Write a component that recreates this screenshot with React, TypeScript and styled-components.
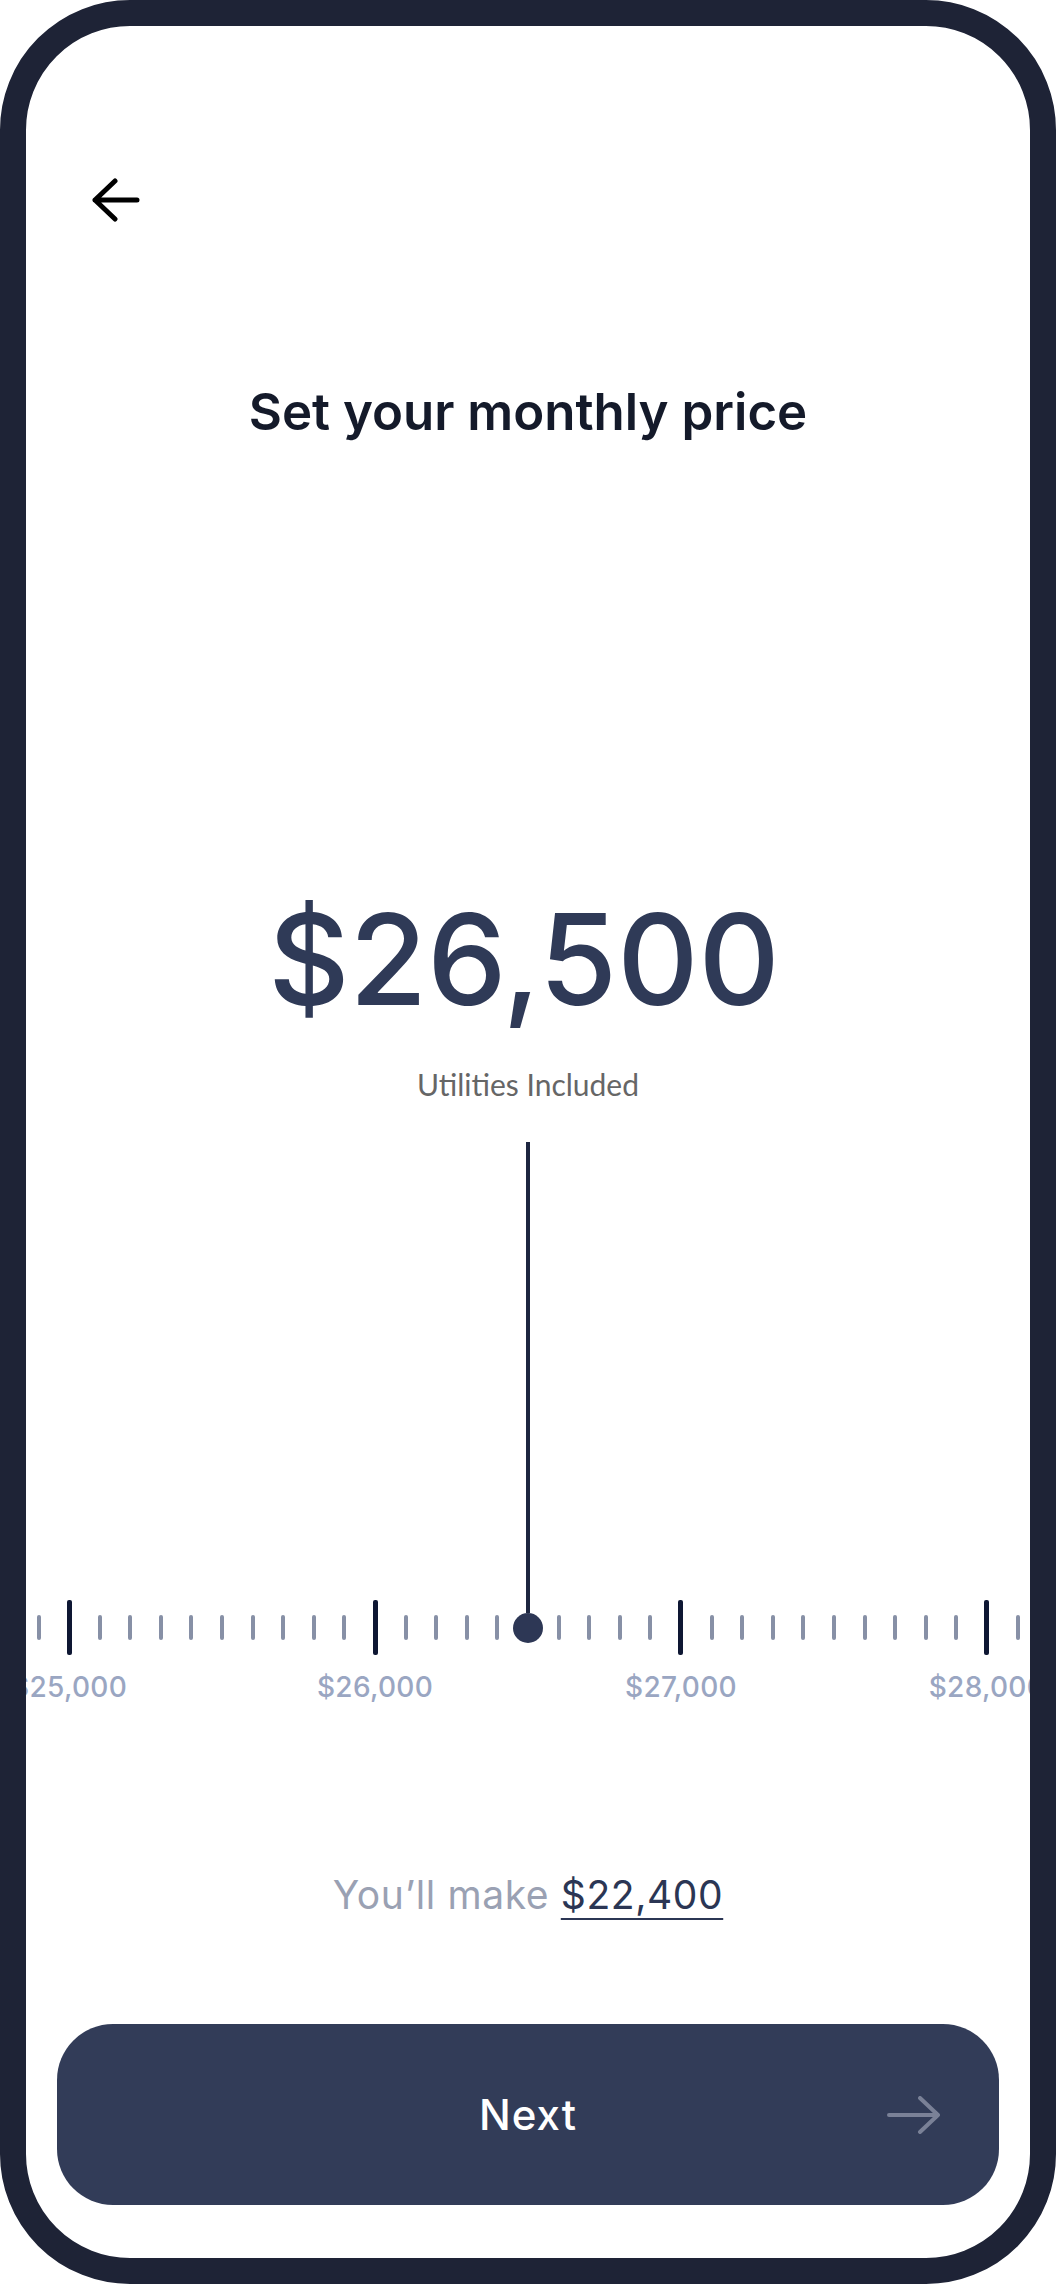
import styled, { createGlobalStyle } from "styled-components";

const GlobalStyle = createGlobalStyle`
    html, body {
        margin:0;
        padding:0;
        background:#ffffff;
    }
    * {
        box-sizing:border-box;
    }
`;

const Phone = styled.div`
    width:1056px;
    height:2284px;
    border:26px solid #1e2336;
    border-radius:130px;
    overflow:hidden;
    background:#ffffff;
    display:flex;
    flex-direction:column;
    font-family:Inter, "Noto Sans", sans-serif;
`;
const TopBar = styled.div`
    padding:152px 0 0 66px;
    display:flex;
`;
const BackBtn = styled.button`
    border:0;
    padding:0;
    background:none;
    display:flex;
    cursor:pointer;
`;
const Title = styled.h1`
    margin:158px 0 0;
    font-size:51px;
    line-height:60px;
    font-weight:600;
    color:#141a2a;
    text-align:center;
`;
const Price = styled.div`
    margin-top:454px;
    padding-right:8px;
    font-size:126px;
    line-height:126px;
    font-weight:500;
    color:#2f3a57;
    text-align:center;
`;
const Note = styled.div`
    margin-top:44px;
    font-family:Lato, "Open Sans", sans-serif;
    font-size:30px;
    line-height:36px;
    color:#666666;
    text-align:center;
`;
const Stage = styled.div`
    margin-top:40px;
    position:relative;
    padding-top:458px;
`;
const Needle = styled.div`
    position:absolute;
    top:0;
    left:50%;
    transform:translateX(-50%);
    width:30px;
    display:flex;
    flex-direction:column;
    align-items:center;
    z-index:2;
`;
const NeedleLine = styled.div`
    width:4px;
    height:471px;
    background:#1d2640;
`;
const NeedleDot = styled.div`
    width:30px;
    height:30px;
    border-radius:50%;
    background:#2d3755;
`;
const Ruler = styled.div`
    display:flex;
    justify-content:center;
    align-items:flex-start;
`;
const Slot = styled.div`
    flex:0 0 30.6px;
    width:30.6px;
    min-width:0;
    display:flex;
    flex-direction:column;
    align-items:center;
`;
const TickBox = styled.div`
    height:55px;
    display:flex;
    align-items:center;
`;
const Tick = styled.div<{ $major?: boolean }>`
    width:${p => p.$major ? 5 : 4}px;
    height:${p => p.$major ? 55 : 25}px;
    border-radius:2px;
    background:${p => p.$major ? "#0e1733" : "#8790a6"};
`;
const TickLabel = styled.div`
    margin-top:16px;
    font-size:28px;
    line-height:32px;
    font-weight:500;
    color:#9aa6c2;
    white-space:nowrap;
    letter-spacing:0.3px;
`;
const Earn = styled.div`
    margin-top:169px;
    font-size:39px;
    line-height:46px;
    color:#9aa1b3;
    text-align:center;
    letter-spacing:0.6px;
`;
const EarnValue = styled.span`
    color:#2b3654;
    text-decoration:underline;
    text-decoration-thickness:2px;
    text-underline-offset:9px;
`;
const NextBtn = styled.button`
    margin:106px 31px 0;
    height:181px;
    border:0;
    border-radius:56px;
    background:#323c58;
    display:grid;
    grid-template-columns:1fr auto 1fr;
    align-items:center;
    padding:0 58px;
    font-family:Inter, "Noto Sans", sans-serif;
    font-size:42px;
    font-weight:500;
    color:#ffffff;
    letter-spacing:1px;
`;
const NextLabel = styled.span`
    grid-column:2;
`;
const NextArrow = styled.span`
    grid-column:3;
    justify-self:end;
    display:flex;
`;

const ticks: number[] = [];
for (let v = 24800; v <= 28200; v += 100) ticks.push(v);

function fmt(v: number) {
    return "$" + v.toLocaleString("en-US");
}

export default function App() {
    return (
        <>
            <GlobalStyle />
            <Phone>
                <TopBar>
                    <BackBtn aria-label="Back">
                        <svg width="48" height="46" viewBox="0 0 48 46" fill="none" stroke="#000" strokeWidth="5" strokeLinecap="round" strokeLinejoin="round">
                            <path d="M45 22H3M23 3L3 22l20 19" />
                        </svg>
                    </BackBtn>
                </TopBar>
                <Title>Set your monthly price</Title>
                <Price>$26,500</Price>
                <Note>Utilities Included</Note>
                <Stage>
                    <Needle>
                        <NeedleLine />
                        <NeedleDot />
                    </Needle>
                    <Ruler>
                        {ticks.map(v => {
                            const major = v % 1000 === 0;
                            return (
                                <Slot key={v}>
                                    <TickBox>
                                        <Tick $major={major} />
                                    </TickBox>
                                    {major && <TickLabel>{fmt(v)}</TickLabel>}
                                </Slot>
                            );
                        })}
                    </Ruler>
                </Stage>
                <Earn>
                    You’ll make <EarnValue>$22,400</EarnValue>
                </Earn>
                <NextBtn>
                    <NextLabel>Next</NextLabel>
                    <NextArrow>
                        <svg width="54" height="38" viewBox="0 0 54 38" fill="none" stroke="#7a8197" strokeWidth="4" strokeLinecap="round" strokeLinejoin="round">
                            <path d="M2 19h49M33 2l18 17-18 17" />
                        </svg>
                    </NextArrow>
                </NextBtn>
            </Phone>
        </>
    );
}
